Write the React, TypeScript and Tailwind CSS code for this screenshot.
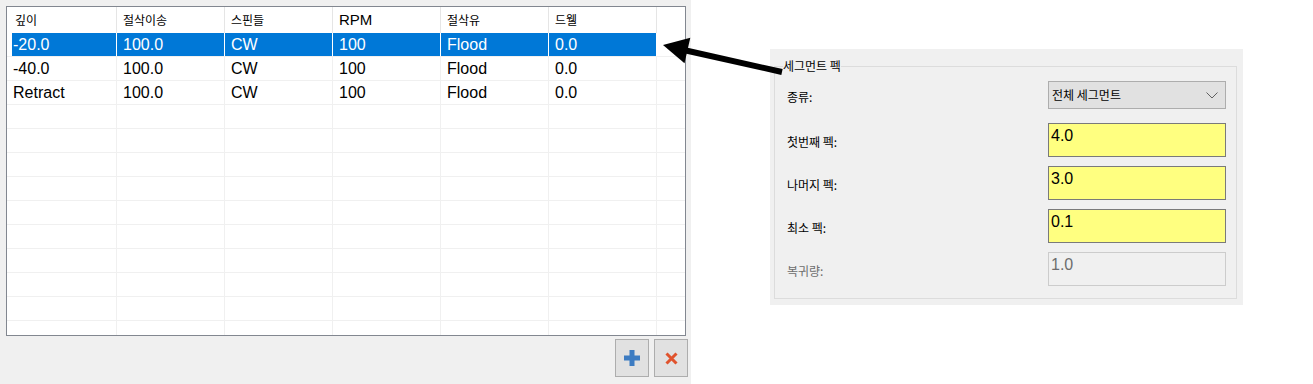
const KR = "font-['Noto_Sans_CJK_KR',sans-serif]";
const LAT = "font-['Liberation_Sans','Noto_Sans_CJK_KR',sans-serif]";

const COLUMNS = [
  { label: '깊이', latin: false },
  { label: '절삭이송', latin: false },
  { label: '스핀들', latin: false },
  { label: 'RPM', latin: true },
  { label: '절삭유', latin: false },
  { label: '드웰', latin: false },
];

const ROWS = [
  ['-20.0', '100.0', 'CW', '100', 'Flood', '0.0'],
  ['-40.0', '100.0', 'CW', '100', 'Flood', '0.0'],
  ['Retract', '100.0', 'CW', '100', 'Flood', '0.0'],
];

const EMPTY_ROWS = 10;

const colWidth = (i: number) => (i === 0 ? 'w-[110px]' : 'w-[108px]');

const StepTable = () => {
  const body = [...ROWS, ...Array.from({ length: EMPTY_ROWS }, () => ['', '', '', '', '', ''])];
  return (
    <div className="w-[680px] h-[330px] border border-[#828790] bg-white overflow-hidden">
      <div className="flex h-[26px]">
        {COLUMNS.map((c, i) => (
          <div
            key={c.label}
            className={`${colWidth(i)} shrink-0 border-r border-[#e5e5e5] flex items-center ${i === 0 ? 'pl-[8px]' : 'pl-[6px]'} ${c.latin ? `${LAT} text-[15px]` : `${KR} text-[12px]`} text-black`}
          >
            {c.label}
          </div>
        ))}
        <div className="flex-1" />
      </div>
      {body.map((row, r) => {
        const selected = r === 0;
        return (
          <div key={r} className="flex h-[24px] border-b border-[#f0f0f0]">
            {row.map((cell, i) => (
              <div
                key={i}
                className={`${colWidth(i)} shrink-0 border-r ${selected ? 'border-white' : 'border-[#f0f0f0]'} ${i === 0 && selected ? 'pl-[5px]' : ''}`}
              >
                <div
                  className={`h-full flex items-center ${i === 0 && selected ? 'pl-[1px]' : 'pl-[6px]'} ${LAT} text-[16px] ${selected ? 'bg-[#0078d7] text-white' : 'text-black'}`}
                >
                  {cell}
                </div>
              </div>
            ))}
            <div className="flex-1" />
          </div>
        );
      })}
    </div>
  );
};

const IconButton = ({ children }: { children: React.ReactNode }) => (
  <button className="w-[34px] h-[38px] bg-[#e1e1e1] border border-[#adadad] flex items-center justify-center">
    {children}
  </button>
);

const LeftPanel = () => (
  <div className="w-[691px] h-[384px] shrink-0 bg-[#f0f0f0] pt-[6px] pl-[6px]">
    <StepTable />
    <div className="flex justify-end gap-[5px] w-[682px] mt-[3px]">
      <IconButton>
        <svg width="16" height="16" viewBox="0 0 16 16">
          <rect x="5.5" y="0" width="5" height="16" fill="#3d7cc2" />
          <rect x="0" y="5.5" width="16" height="5" fill="#3d7cc2" />
        </svg>
      </IconButton>
      <IconButton>
        <svg width="13" height="13" viewBox="0 0 13 13">
          <path d="M1.5 1.5 L11.5 11.5 M11.5 1.5 L1.5 11.5" stroke="#e0532d" strokeWidth="3" />
        </svg>
      </IconButton>
    </div>
  </div>
);

const Label = ({ text, disabled }: { text: string; disabled?: boolean }) => (
  <span className={`${KR} text-[12px] pt-[3px] ${disabled ? 'text-[#6d6d6d]' : 'text-black'}`}>{text}</span>
);

const Field = ({ value, disabled }: { value: string; disabled?: boolean }) => (
  <div
    className={`w-[178px] h-[34px] border pl-[2px] pt-[2px] ${LAT} text-[16px] leading-[20px] ${
      disabled ? 'border-[#cccccc] bg-[#f0f0f0] text-[#6d6d6d]' : 'border-[#7a7a7a] bg-[#ffff80] text-black'
    }`}
  >
    {value}
  </div>
);

const PeckPanel = () => (
  <div className="w-[473px] h-[256px] bg-[#f0f0f0] pt-[9px] pl-[4px] pr-[6px]">
    <fieldset className="border border-[#dcdcdc] h-[241px] pl-[12px] pr-[10px]">
      <legend className={`${KR} text-[12px] leading-[16px] text-black ml-[-4px]`}>세그먼트 펙</legend>
      <div className="flex items-center justify-between h-[28px] mt-[7px]">
        <Label text="종류:" />
        <div className="w-[178px] h-[28px] bg-[#e1e1e1] border border-[#adadad] flex items-center justify-between pl-[3px] pr-[7px]">
          <span className={`${KR} text-[12px] text-black`}>전체 세그먼트</span>
          <svg width="12" height="7" viewBox="0 0 12 7">
            <path d="M0.5 0.5 L6 6 L11.5 0.5" stroke="#606060" strokeWidth="1" fill="none" />
          </svg>
        </div>
      </div>
      <div className="flex flex-col gap-[9px] mt-[14px]">
        <div className="flex items-center justify-between">
          <Label text="첫번째 펙:" />
          <Field value="4.0" />
        </div>
        <div className="flex items-center justify-between">
          <Label text="나머지 펙:" />
          <Field value="3.0" />
        </div>
        <div className="flex items-center justify-between">
          <Label text="최소 펙:" />
          <Field value="0.1" />
        </div>
        <div className="flex items-center justify-between">
          <Label text="복귀량:" disabled />
          <Field value="1.0" disabled />
        </div>
      </div>
    </fieldset>
  </div>
);

const App = () => (
  <div className="relative flex w-[1313px] h-[384px] bg-white overflow-hidden">
    <LeftPanel />
    <div className="flex-1 pl-[79px] pt-[49px]">
      <PeckPanel />
    </div>
    <svg className="absolute left-0 top-0 pointer-events-none" width="1313" height="384" viewBox="0 0 1313 384">
      <line x1="686" y1="50.5" x2="782" y2="72" stroke="#000" strokeWidth="6" />
      <polygon points="663,45 690.3,37.8 684.5,63.2" fill="#000" />
    </svg>
  </div>
);

export default App;
